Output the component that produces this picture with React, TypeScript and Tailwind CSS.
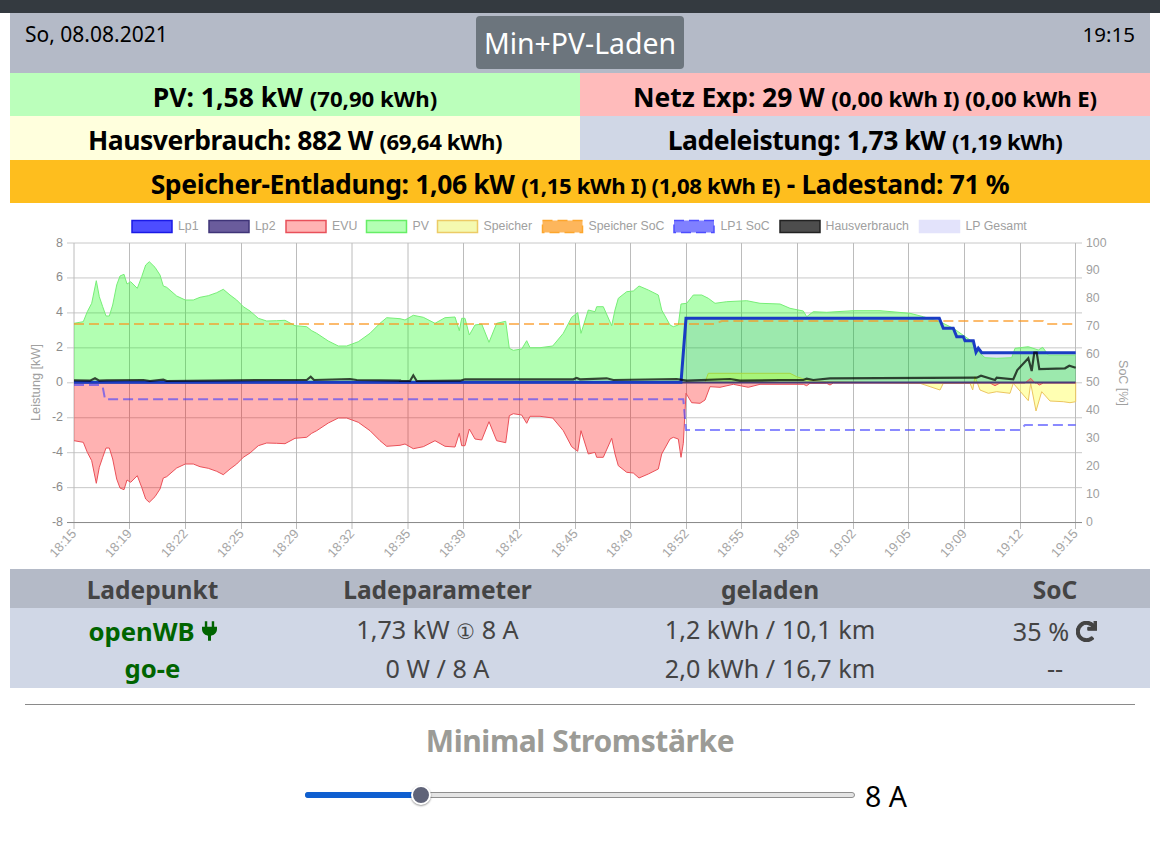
import React from "react";
import { FaRedo } from "react-icons/fa";

type P = [number, number];
const z2 = (a: number[]): P[] => { const r: P[] = []; for (let i = 0; i < a.length; i += 2) r.push([a[i] / 3, 210 + a[i + 1] / 3]); return r; };
const z3 = (a: number[]): P[] => z2(a).map(([x, y]) => [x + 400, y] as P);
const z4 = (a: number[]): P[] => z2(a).map(([x, y]) => [x + 780, y] as P);
const ZERO = 382.5;
const line = (p: P[]) => p.map(([x, y], i) => `${i ? "L" : "M"}${x.toFixed(1)} ${y.toFixed(1)}`).join(" ");
const area = (p: P[]) => `${line(p)} L${p[p.length - 1][0].toFixed(1)} ${ZERO} L${p[0][0].toFixed(1)} ${ZERO} Z`;

const pvA = [
  ...z2([222,340,250,335,262,305,275,280,289,212,298,260,308,290,318,318,328,318,338,285,350,225,360,198,372,193,381,222,392,215,412,235,425,200,437,165,448,155,465,172,480,195,490,228,500,232,530,258,556,270,580,270,600,262,625,257,650,248,670,238,690,255,710,270,730,290,750,303,775,325,800,333,830,332,855,331,885,347,920,350,935,362,950,370,985,393,1015,408,1040,408,1075,395,1110,370,1140,340,1160,323]),
  ...z3([0,326,15,330,40,316,70,322,105,340,135,323,165,321,178,362,185,325,195,325,208,375,225,345,245,342,267,397,290,340,317,334,328,415,340,421,365,417,380,392,390,413,420,413,458,408,490,370,515,322,533,308,543,370,565,300,585,305,590,290,610,290,635,347,645,300,655,265,680,245,700,243,717,228,745,240,775,255,785,300,810,345,820,350,835,345,843,282]),
];
const pvB = [
  ...z3([860,280,880,255,905,255,925,265,945,280,980,275,1040,272,1080,280,1140,282]),
  ...z4([30,295,70,303,80,320,100,305,140,307,220,302,300,302,390,310,430,320,480,335,520,355,570,390,590,420,615,443,650,445,695,443,705,415,745,410,775,420,788,412,805,435,887,435]),
];
const pv = [...pvA, ...pvB];
const evu: P[] = [
  ...pvA.slice(0, -1).map(([x, y]) => [x, 2 * ZERO - y - 1] as P),
  ...z3([843,742,850,700,858,550,875,578,900,580,915,570,930,530,960,532,1000,523,1045,532,1080,523,1140,523]),
  ...z4([70,523,80,527,90,520,140,520,150,525,160,519,630,519,645,527,660,519,735,519,752,505,765,519,770,519,778,525,790,519,887,519]),
];
const speicher: P[] = [
  [74, ZERO],
  ...z3([915,517,925,490,1140,490]),
  ...z4([30,490,50,500,80,510,140,515,420,520,480,540,490,520,570,520,578,540,585,500,600,540,625,550,650,545,690,550,700,520,745,572,752,520,768,603,785,545,810,573,850,575,870,578,887,575]),
];
const lp1: P[] = [
  ...z3([-978,517,843,517,858,325]),
  ...z4([478,325,490,355,520,355,530,380,550,380,555,392,580,392,588,427,595,415,605,428,887,428]),
];
const lp2: P[] = [[74, ZERO], [1075.5, ZERO]];
const haus: P[] = [
  ...z2([222,511,270,512,285,505,298,512,320,511,430,510,450,513,490,509,500,513,700,511,920,510,932,500,942,510,1050,507,1070,510,1200,512]),
  ...z3([0,513,30,513,40,496,50,513,180,512,195,508,520,508,530,504,540,508,620,505,640,510,830,507,860,512,990,507,1020,512,1140,510]),
  ...z4([70,510,80,506,100,510,150,505,590,503,603,497,645,510,650,503,700,508,712,480,745,445,755,483,763,428,770,428,778,477,855,475,868,467,887,473]),
];
const spSoc: P[] = [
  ...z2([222,342]),
  ...z3([945,342,965,333]),
  ...z4([790,333,800,342,887,342]),
];
const lpSoc: P[] = [
  ...z2([222,525,298,525,308,530,315,568]),
  ...z3([850,568,858,660]),
  ...z4([720,660,735,645,887,645]),
];

const xTicks: [number, string][] = [[74,"18:15"],[129.5,"18:19"],[185.5,"18:22"],[241.5,"18:25"],[296.5,"18:29"],[352,"18:32"],[408,"18:35"],[463.5,"18:39"],[519.5,"18:42"],[575.5,"18:45"],[630.5,"18:49"],[686.5,"18:52"],[741.5,"18:55"],[797.5,"18:59"],[853.5,"19:02"],[908.5,"19:05"],[964.5,"19:09"],[1020.5,"19:12"],[1075.5,"19:15"]];
const yVals = [8, 6, 4, 2, 0, -2, -4, -6, -8];
const legend: { x: number; t: string; tx: number; fill: string; stroke: string; dash?: boolean }[] = [
  { x: 132, t: "Lp1", tx: 178, fill: "#4d4dff", stroke: "#1a1ae6" },
  { x: 209, t: "Lp2", tx: 255, fill: "#6a5c9c", stroke: "#3f3478" },
  { x: 286, t: "EVU", tx: 332, fill: "#ffb3b3", stroke: "#e8505a" },
  { x: 366.5, t: "PV", tx: 412.5, fill: "#b3ffb3", stroke: "#66ee66" },
  { x: 437.5, t: "Speicher", tx: 483.5, fill: "#f4f9b0", stroke: "#eccb66" },
  { x: 542.5, t: "Speicher SoC", tx: 588.5, fill: "#fdb65c", stroke: "#fda62c", dash: true },
  { x: 674, t: "LP1 SoC", tx: 720.5, fill: "#8080ff", stroke: "#4d4dff", dash: true },
  { x: 780, t: "Hausverbrauch", tx: 825.5, fill: "#4d4d4d", stroke: "#222222" },
  { x: 919.5, t: "LP Gesamt", tx: 965.5, fill: "#e3e3fb", stroke: "#e3e3fb" },
];

function Chart() {
  return (
    <svg viewBox="10 203 1140 366" className="block w-[1140px] h-[366px]" fontFamily="'Liberation Sans', Arial, sans-serif" fontSize={12}>
      {legend.map((l) => (
        <g key={l.t}>
          <rect x={l.x} y={220.5} width={40} height={12} fill={l.fill} stroke={l.stroke} strokeWidth={1.5} strokeDasharray={l.dash ? "10 5" : undefined} />
          <text x={l.tx} y={230} fontSize={12.3} fill="#a0a0a0">{l.t}</text>
        </g>
      ))}
      {yVals.map((v, i) => {
        const y = 243 + i * 34.95;
        return (
          <g key={v}>
            <line x1={67} x2={1082} y1={y} y2={y} stroke="#c8c8c8" strokeWidth={1} />
            <text x={63} y={y + 3.5} fontSize={12.5} textAnchor="end" fill="#8c8c8c">{v}</text>
          </g>
        );
      })}
      {Array.from({ length: 11 }, (_, i) => {
        const y = 243 + i * 27.96;
        return <text key={i} x={1086} y={y + 3.5} fontSize={12.3} fill="#a0a0a0">{100 - i * 10}</text>;
      })}
      {xTicks.map(([x, t]) => (
        <g key={t}>
          <line x1={x} x2={x} y1={243} y2={529} stroke="#bcbcbc" strokeWidth={1} />
          <text x={x + 3} y={534} fontSize={13} textAnchor="end" fill="#a6a6a6" transform={`rotate(-48 ${x + 3} 534)`}>{t}</text>
        </g>
      ))}
      <line x1={67} x2={1082} y1={522.5} y2={522.5} stroke="#8c8c8c" strokeWidth={1} />
      <text transform="translate(40 382.5) rotate(-90)" fontSize={12.7} textAnchor="middle" fill="#a0a0a0">Leistung [kW]</text>
      <text transform="translate(1119 383) rotate(90)" fontSize={12.5} textAnchor="middle" fill="#a0a0a0">SoC [%]</text>

      <path d={area(lp1)} fill="rgba(0,0,200,0.12)" />
      <path d={area(speicher)} fill="rgba(255,255,102,0.5)" stroke="#ecc560" strokeWidth={1} />
      <path d={area(pv)} fill="rgba(0,255,0,0.3)" />
      <path d={line(pv)} fill="none" stroke="#77ee77" strokeWidth={1} />
      <path d={area(evu)} fill="rgba(255,0,0,0.3)" />
      <path d={line(evu)} fill="none" stroke="#ea5058" strokeWidth={1} />
      <path d={line(spSoc)} fill="none" stroke="rgba(250,150,30,0.65)" strokeWidth={2} strokeDasharray="10 5" />
      <path d={line(lpSoc)} fill="none" stroke="rgba(60,60,255,0.6)" strokeWidth={2} strokeDasharray="10 5" />
      <path d={line(lp2)} fill="none" stroke="#4a3a78" strokeWidth={2} />
      <path d={line(lp1)} fill="none" stroke="#1a3cc4" strokeWidth={3} />
      <path d={line(haus)} fill="none" stroke="rgba(0,0,0,0.72)" strokeWidth={2.2} />
    </svg>
  );
}

function PlugIcon() {
  return (
    <svg viewBox="0 0 16 21" className="w-[15px] h-[20px] fill-current">
      <path d="M3 0h2.6v6H3zM10.4 0H13v6h-2.6zM0 6h16v2.4c0 3.6-2.8 6.6-6.4 7.1V21H6.4v-5.5C2.8 15 0 12 0 8.4z" />
    </svg>
  );
}

export default function App() {
  return (
    <div className="w-[1160px] h-[858px] overflow-hidden bg-white text-black font-['Noto_Sans',sans-serif]">
      <div className="h-[13px] bg-[#343a40]" />
      <div className="mx-[10px]">
        <div className="h-[60px] bg-[#b4bac7] grid grid-cols-3 px-[15px]">
          <div className="text-[21px] leading-[30px] pt-[6px]">So, 08.08.2021</div>
          <div className="flex justify-center pt-[3px]">
            <div className="w-[208px] h-[53px] pt-[1px] bg-[#6c757d] rounded-[4px] text-white text-[28.4px] flex items-center justify-center">Min+PV-Laden</div>
          </div>
          <div className="text-[20.5px] leading-[30px] pt-[6px] text-right">19:15</div>
        </div>
        <div className="grid grid-cols-2 font-bold text-[26.5px] text-center">
          <div className="h-[43px] leading-[49px] bg-[#bbffbb]">PV: 1,58 kW <span className="text-[22.2px]">(70,90 kWh)</span></div>
          <div className="h-[43px] leading-[49px] tracking-[-0.1px] bg-[#ffbbbb]">Netz Exp: 29 W <span className="text-[22.2px]">(0,00 kWh I) (0,00 kWh E)</span></div>
          <div className="h-[44px] leading-[49px] tracking-[-0.44px] bg-[#ffffdd]">Hausverbrauch: 882 W <span className="text-[22.2px]">(69,64 kWh)</span></div>
          <div className="h-[44px] leading-[49px] tracking-[-0.45px] bg-[#d0d7e6]">Ladeleistung: 1,73 kW <span className="text-[22.2px]">(1,19 kWh)</span></div>
          <div className="col-span-2 h-[43px] leading-[48px] tracking-[-0.36px] bg-[#febe1e]">Speicher-Entladung: 1,06 kW <span className="text-[22.2px]">(1,15 kWh I) (1,08 kWh E)</span> - Ladestand: 71 %</div>
        </div>
        <Chart />
        <div className="text-center">
          <div className="grid grid-cols-12 h-[39px] bg-[#b4bac7] text-[#444444] font-bold text-[24.5px] leading-[42px]">
            <div className="col-span-3">Ladepunkt</div>
            <div className="col-span-3">Ladeparameter</div>
            <div className="col-span-4">geladen</div>
            <div className="col-span-2">SoC</div>
          </div>
          <div className="grid grid-cols-12 h-[40px] bg-[#d0d7e6] text-[#444444] text-[25.2px] leading-[43px]">
            <div className="col-span-3 font-bold text-[25.7px] text-[#006400] flex items-center justify-center gap-[7px]">openWB <PlugIcon /></div>
            <div className="col-span-3">1,73 kW <span className="font-['DejaVu_Sans',sans-serif] text-[21px]">①</span> 8 A</div>
            <div className="col-span-4">1,2 kWh / 10,1 km</div>
            <div className="col-span-2 flex items-center justify-center gap-[7px]">35 % <FaRedo className="w-[21px] h-[21px]" stroke="currentColor" strokeWidth={28} /></div>
          </div>
          <div className="grid grid-cols-12 h-[40px] bg-[#d0d7e6] text-[#444444] text-[25.2px] leading-[41px]">
            <div className="col-span-3 font-bold text-[25.7px] text-[#006400]">go-e</div>
            <div className="col-span-3">0 W / 8 A</div>
            <div className="col-span-4">2,0 kWh / 16,7 km</div>
            <div className="col-span-2">--</div>
          </div>
        </div>
        <div className="mx-[15px] mt-[16px] border-t border-[#8a8a8a]" />
        <div className="mt-[16px] text-center font-bold text-[30px] leading-[40px] text-[#9b9b96] tracking-[-0.4px]">Minimal Stromstärke</div>
        <div className="mt-[14px] ml-[295px] flex items-center h-[40px]">
          <div className="relative w-[550px] h-[6px] rounded-full bg-[#e4e4e4] border border-[#8f8f8f]">
            <div className="absolute left-[-1px] top-[-1px] h-[6px] w-[116px] rounded-full bg-[#0f5fd0]" />
            <div className="absolute left-[105px] top-[-8px] w-[20px] h-[20px] rounded-full bg-[#5f6378] border-2 border-white shadow-[0_1px_2px_rgba(0,0,0,0.4)]" />
          </div>
          <div className="ml-[10px] pt-[2px] text-[28.5px] leading-[40px]">8 A</div>
        </div>
      </div>
    </div>
  );
}
